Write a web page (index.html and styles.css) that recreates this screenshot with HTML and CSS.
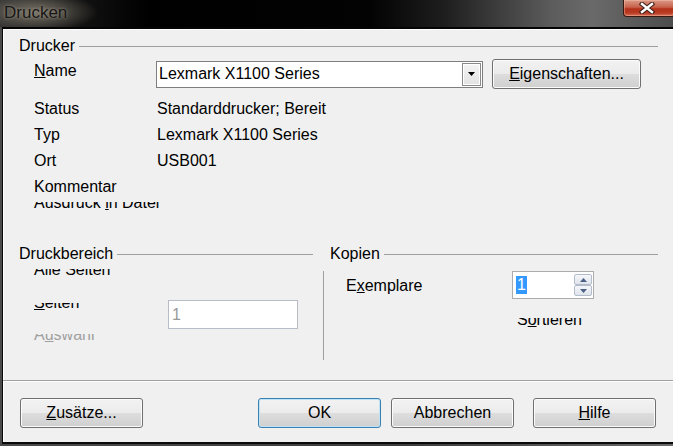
FILE: index.html
```html
<!DOCTYPE html>
<html lang="de">
<head>
    <meta charset="UTF-8">
    <title>Drucken</title>
    <link rel="stylesheet" href="styles.css">
</head>
<body>
    <div class="window">
        <div class="titlebar">
            <span class="title">Drucken</span>
            <span class="close-btn">
                <svg width="16" height="12" viewBox="0 0 16 12">
                    <path d="M3 2 L13 10 M13 2 L3 10" stroke="#3b1d16" stroke-width="4.5" stroke-linecap="square"/>
                    <path d="M3 2 L13 10 M13 2 L3 10" stroke="#ffffff" stroke-width="2.4" stroke-linecap="square"/>
                </svg>
            </span>
        </div>

        <div class="dialog">
            <div class="group-title"><span>Drucker</span><span class="rule"></span></div>

            <div class="name-row">
                <span class="name-label"><u>N</u>ame</span>
                <div class="combo">
                    <span class="combo-text">Lexmark X1100 Series</span>
                    <span class="combo-btn">
                        <svg width="7" height="4" viewBox="0 0 7 4"><path d="M0 0 H7 L3.5 4 Z" fill="#000"/></svg>
                    </span>
                </div>
                <button class="btn btn-props"><u>E</u>igenschaften...</button>
            </div>

            <div class="info-rows">
                <div class="info-row"><span class="info-label">Status</span><span>Standarddrucker; Bereit</span></div>
                <div class="info-row"><span class="info-label">Typ</span><span>Lexmark X1100 Series</span></div>
                <div class="info-row"><span class="info-label">Ort</span><span>USB001</span></div>
                <div class="info-row"><span class="info-label">Kommentar</span><span></span></div>
            </div>

            <div class="clip clip-file"><span>Ausdruck <u>i</u>n Datei</span></div>

            <div class="lower">
                <div class="range">
                    <div class="group-title"><span>Druckbereich</span><span class="rule"></span></div>
                    <div class="clip clip-all"><span>Alle Seiten</span></div>
                    <div class="pages-row">
                        <div class="clip clip-pages"><span><u>S</u>eiten</span></div>
                        <input class="pages-input" type="text" value="1" disabled>
                    </div>
                    <div class="clip clip-sel"><span>A<u>u</u>swahl</span></div>
                </div>

                <div class="copies">
                    <div class="group-title copies-title"><span>Kopien</span><span class="rule"></span></div>
                    <div class="copies-body">
                        <div class="copies-row">
                            <span class="copies-label">E<u>x</u>emplare</span>
                            <div class="spin">
                                <span class="spin-value">1</span>
                                <span class="spin-btns">
                                    <span class="spin-btn">
                                        <svg width="7" height="4" viewBox="0 0 7 4"><path d="M0 4 H7 L3.5 0 Z" fill="#4d6185"/></svg>
                                    </span>
                                    <span class="spin-btn">
                                        <svg width="7" height="4" viewBox="0 0 7 4"><path d="M0 0 H7 L3.5 4 Z" fill="#4d6185"/></svg>
                                    </span>
                                </span>
                            </div>
                        </div>
                        <div class="clip clip-sort"><span>S<u>o</u>rtieren</span></div>
                    </div>
                </div>
            </div>

            <div class="separator"></div>

            <div class="buttons">
                <button class="btn btn-extra"><u>Z</u>usätze...</button>
                <button class="btn btn-default">OK</button>
                <button class="btn btn-cancel">Abbrechen</button>
                <button class="btn btn-help"><u>H</u>ilfe</button>
            </div>
        </div>
    </div>
</body>
</html>
```

FILE: styles.css
```css
body {
    margin: 0;
    font-family: "Liberation Sans", Arial, sans-serif;
    font-size: 16px;
    color: #000;
    background: #000;
}
.window {
    width: 673px;
    height: 446px;
    box-sizing: border-box;
    padding-bottom: 2px;
    display: flex;
    flex-direction: column;
    overflow: hidden;
    background: linear-gradient(to right, #4a4a4a, #3c3c3c 60%, #6a6a6a);
}

/* title bar */
.titlebar {
    height: 27px;
    flex-shrink: 0;
    display: flex;
    justify-content: space-between;
    align-items: flex-start;
    background:
        radial-gradient(ellipse 62px 20px at 36px 12px, rgba(150, 142, 125, 0.75), rgba(60, 60, 60, 0) 100%),
        linear-gradient(to right, #2e2e2e 0, #121212 12%, #000 22%, #030303 55%, #1e1e1e 66%, #5c5c5c 82%, #6a6a6a 88%, #4c4c4c 100%);
}
.title {
    padding: 2px 0 0 4px;
    line-height: 22px;
    font-size: 17px;
    color: #161616;
    text-shadow: 0 0 3px rgba(200, 190, 170, 0.6);
}
.close-btn {
    width: 52px;
    height: 17px;
    margin-right: -2px;
    box-sizing: border-box;
    border: 1px solid #3a1812;
    border-top: none;
    border-radius: 0 0 4px 4px;
    display: flex;
    justify-content: center;
    align-items: center;
    padding-right: 4px;
    background: linear-gradient(#d99a88 0%, #c8614b 45%, #b4301a 55%, #b83a22 80%, #d8705a 100%);
    box-shadow: inset 0 0 0 1px rgba(255, 200, 180, 0.4);
}

/* dialog body */
.dialog {
    flex: 1;
    margin-left: 2px;
    padding: 8px 15px 0 16px;
    background-color: #f0f0f0;
    border-top: 2px solid #050505;
    border-left: 1px solid #0a0a0a;
    border-bottom: 2px solid #0a0a0a;
    box-shadow: inset 1px 1px 0 #ffffff;
}
.group-title {
    height: 18px;
    line-height: 18px;
    display: flex;
    align-items: center;
    gap: 4px;
}
.group-title .rule {
    flex: 1;
    height: 1px;
    background-color: #a0a0a0;
}

.name-row {
    margin-top: 4px;
    height: 30px;
    display: flex;
    align-items: center;
}
.name-label {
    width: 122px;
    padding-left: 15px;
    margin-top: -6px;
}
.combo {
    width: 327px;
    height: 27px;
    box-sizing: border-box;
    border: 1px solid #7f7f7f;
    background-color: #fff;
    display: flex;
    align-items: center;
    justify-content: space-between;
}
.combo-text {
    padding-left: 2px;
}
.combo-btn {
    width: 19px;
    height: 23px;
    margin-right: 1px;
    box-sizing: border-box;
    border: 1px solid #8a8a8a;
    box-shadow: inset 0 0 0 1px #fff;
    background: linear-gradient(#f4f4f4, #e2e2e2);
    display: flex;
    align-items: center;
    justify-content: center;
}

.btn {
    height: 30px;
    box-sizing: border-box;
    border: 1px solid #707070;
    border-radius: 3px;
    background: linear-gradient(#f2f2f2 0%, #ebebeb 50%, #dddddd 51%, #cfcfcf 100%);
    box-shadow: inset 0 0 0 1px #fbfbfb;
    font-family: "Liberation Sans", Arial, sans-serif;
    font-size: 16px;
    color: #000;
    padding: 0;
}
.btn-props {
    width: 149px;
    margin-left: 9px;
}

.info-rows {
    margin-top: 7px;
}
.info-row {
    height: 26px;
    line-height: 26px;
    display: flex;
}
.info-label {
    width: 123px;
    padding-left: 15px;
}

/* labels cut off at the top */
.clip {
    height: 10px;
    overflow: hidden;
    padding-left: 15px;
}
.clip span {
    display: block;
    line-height: 18px;
    margin-top: -7px;
    white-space: nowrap;
}
.clip-file {
    margin-top: 2px;
}
.clip-file span {
    margin-top: -8px;
}

.lower {
    margin-top: 33px;
    display: grid;
    grid-template-columns: 294px 335px;
    column-gap: 10px;
    align-items: start;
}
.clip-all {
    margin-top: 6px;
}
.clip-all span {
    margin-top: -8px;
}
.pages-row {
    margin-top: 21px;
    height: 28px;
    display: flex;
    align-items: flex-start;
}
.clip-pages {
    width: 149px;
    padding-left: 15px;
    box-sizing: border-box;
    margin-top: 3px;
}
.clip-pages span {
    margin-top: -9px;
}
.pages-input {
    width: 130px;
    height: 29px;
    box-sizing: border-box;
    margin: 0;
    border: 1px solid #b7bcc6;
    background-color: #fff;
    padding: 0 0 0 3px;
    font-family: "Liberation Sans", Arial, sans-serif;
    font-size: 16px;
    color: #9a9a9a;
}
.clip-sel {
    margin-top: 6px;
    color: #a0a0a0;
}
.clip-sel span {
    margin-top: -8px;
}

.copies-title {
    padding-left: 7px;
}
.copies-body {
    margin-top: 8px;
    height: 89px;
    border-left: 1px solid #a0a0a0;
    padding-left: 22px;
}
.copies-row {
    height: 28px;
    display: flex;
    align-items: center;
}
.copies-label {
    width: 166px;
    padding-top: 1px;
}
.spin {
    width: 82px;
    height: 28px;
    box-sizing: border-box;
    border: 1px solid #acacac;
    background-color: #fff;
    display: flex;
    align-items: center;
    justify-content: space-between;
    padding: 0 1px 0 3px;
}
.spin-value {
    height: 18px;
    line-height: 18px;
    padding: 0 1px;
    background-color: #3399ff;
    color: #fff;
}
.spin-btns {
    display: flex;
    flex-direction: column;
}
.spin-btn {
    width: 18px;
    height: 11px;
    box-sizing: border-box;
    border: 1px solid #b4bccb;
    border-radius: 2px;
    background: linear-gradient(#f5f7fa, #dfe4ec);
    display: flex;
    align-items: center;
    justify-content: center;
}
.clip-sort {
    margin-top: 19px;
    padding-left: 171px;
}
.clip-sort span {
    margin-top: -7px;
}

.separator {
    margin: 20px -15px 0 -16px;
    height: 0;
    border-top: 1px solid #a0a0a0;
    border-bottom: 1px solid #ffffff;
}

.buttons {
    margin-top: 16px;
    display: flex;
}
.btn-extra {
    width: 123px;
    margin-left: 1px;
}
.btn-default {
    width: 123px;
    margin-left: 115px;
    border-color: #3c7fb1;
    box-shadow: inset 0 0 0 1px #bde4f6;
}
.btn-cancel {
    width: 123px;
    margin-left: 10px;
}
.btn-help {
    width: 123px;
    margin-left: 19px;
}
```
